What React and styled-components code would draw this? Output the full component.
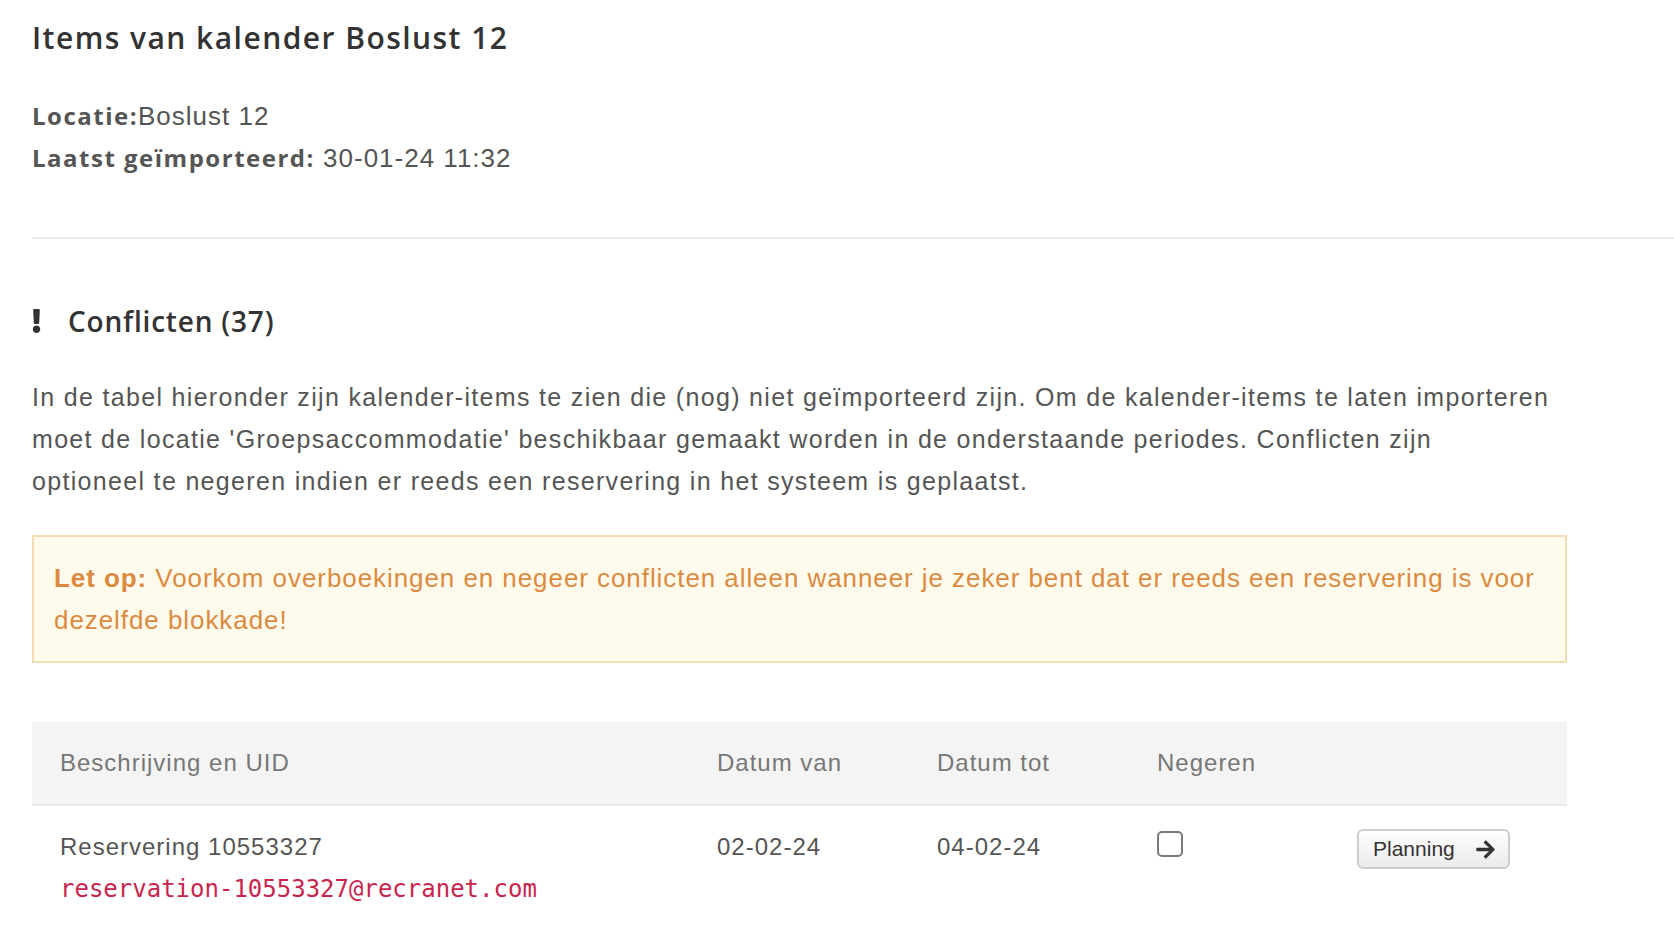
import React from "react";
import styled, { createGlobalStyle } from "styled-components";
import { FaExclamation, FaArrowRight } from "react-icons/fa";

const GlobalStyle = createGlobalStyle`
  body {
    margin: 0;
    background: #fff;
    color: #555;
    font-family: "Liberation Sans", Helvetica, Arial, sans-serif;
    font-size: 24px;
    line-height: 42px;
    letter-spacing: 1px;
  }
`;

const StyledPage = styled.main`
  padding: 0 0 40px 32px;
  overflow: hidden;
`;

const StyledTitle = styled.h1`
  margin: 20px 0 39px;
  font-family: "Open Sans", Lato, sans-serif;
  font-size: 30px;
  line-height: 36px;
  font-weight: 600;
  letter-spacing: 1.45px;
  color: #333;
`;

const StyledMeta = styled.div`
  display: flex;
  flex-direction: column;
  font-size: 26px;
  line-height: 41px;
`;

const StyledLabel = styled.strong`
  font-family: "Open Sans", Lato, sans-serif;
  font-size: 24px;
  font-weight: 700;
  letter-spacing: 1.5px;
`;

const StyledDivider = styled.hr`
  margin: 58px 0 0;
  border: 0;
  height: 2px;
  background: #ececec;
`;

const StyledContent = styled.section`
  max-width: 1535px;
`;

const StyledHeading = styled.h2`
  display: flex;
  align-items: center;
  gap: 27px;
  margin: 65px 0 38px;
  font-family: "Open Sans", Lato, sans-serif;
  font-size: 28px;
  line-height: 34px;
  font-weight: 600;
  letter-spacing: 0.8px;
  color: #333;
`;

const StyledAlertIcon = styled(FaExclamation)`
  width: 9px;
  height: 24px;
  color: #333;
  flex: none;
`;

const StyledIntro = styled.p`
  margin: 0 0 33px;
  font-size: 25px;
  letter-spacing: 1.32px;
`;

const StyledWarning = styled.div`
  padding: 20px 20px;
  border: 2px solid #f3dcb6;
  background: #fefbec;
  color: #dc8a3f;
  font-size: 26px;
  letter-spacing: 0.93px;
  strong {
    font-weight: 700;
  }
`;

const StyledTable = styled.div`
  margin-top: 59px;
  display: grid;
  grid-template-columns: 657px 220px 220px 200px 1fr;
`;

const StyledHeadCell = styled.div`
  padding: 20px 28px;
  background: #f4f4f4;
  border-bottom: 2px solid #e9e9e9;
  color: #777;
`;

const StyledCell = styled.div`
  padding: 20px 28px;
  display: flex;
  flex-direction: column;
  align-items: flex-start;
`;

const StyledCode = styled.code`
  font-family: "DejaVu Sans Mono", "Liberation Mono", monospace;
  font-size: 24px;
  letter-spacing: 0;
  color: #c7254e;
`;

const StyledCheckbox = styled.input`
  appearance: none;
  margin: 5px 0 0;
  width: 26px;
  height: 26px;
  border: 2px solid #7a7a7a;
  border-radius: 5px;
  background: #fff;
`;

const StyledButton = styled.button`
  display: inline-flex;
  align-items: center;
  gap: 21px;
  margin-top: 3px;
  height: 40px;
  padding: 0 13px 0 14px;
  border: 2px solid #cdcdcd;
  border-radius: 6px;
  background: linear-gradient(#fff, #ebebeb);
  color: #333;
  font-family: "Liberation Sans", Helvetica, Arial, sans-serif;
  font-size: 21px;
  letter-spacing: 0;
  cursor: pointer;
  svg {
    width: 19px;
    height: 21px;
  }
`;

const rows = [
  {
    title: "Reservering 10553327",
    uid: "reservation-10553327@recranet.com",
    from: "02-02-24",
    to: "04-02-24",
  },
];

const App = () => {
  return (
    <StyledPage>
      <GlobalStyle />
      <StyledTitle>Items van kalender Boslust 12</StyledTitle>
      <StyledMeta>
        <span>
          <StyledLabel>Locatie:</StyledLabel>Boslust 12
        </span>
        <span>
          <StyledLabel>Laatst geïmporteerd:</StyledLabel> 30-01-24 11:32
        </span>
      </StyledMeta>
      <StyledDivider />
      <StyledContent>
        <StyledHeading>
          <StyledAlertIcon />
          Conflicten (37)
        </StyledHeading>
        <StyledIntro>
          In de tabel hieronder zijn kalender-items te zien die (nog) niet
          geïmporteerd zijn. Om de kalender-items te laten importeren
          <br />
          moet de locatie 'Groepsaccommodatie' beschikbaar gemaakt worden in de
          onderstaande periodes. Conflicten zijn
          <br />
          optioneel te negeren indien er reeds een reservering in het systeem
          is geplaatst.
        </StyledIntro>
        <StyledWarning>
          <strong>Let op:</strong> Voorkom overboekingen en negeer conflicten
          alleen wanneer je zeker bent dat er reeds een reservering is voor
          dezelfde blokkade!
        </StyledWarning>
        <StyledTable>
          <StyledHeadCell>Beschrijving en UID</StyledHeadCell>
          <StyledHeadCell>Datum van</StyledHeadCell>
          <StyledHeadCell>Datum tot</StyledHeadCell>
          <StyledHeadCell>Negeren</StyledHeadCell>
          <StyledHeadCell />
          {rows.map((row) => (
            <React.Fragment key={row.uid}>
              <StyledCell>
                <span>{row.title}</span>
                <StyledCode>{row.uid}</StyledCode>
              </StyledCell>
              <StyledCell>{row.from}</StyledCell>
              <StyledCell>{row.to}</StyledCell>
              <StyledCell>
                <StyledCheckbox type="checkbox" />
              </StyledCell>
              <StyledCell>
                <StyledButton>
                  Planning
                  <FaArrowRight />
                </StyledButton>
              </StyledCell>
            </React.Fragment>
          ))}
        </StyledTable>
      </StyledContent>
    </StyledPage>
  );
};

export default App;
